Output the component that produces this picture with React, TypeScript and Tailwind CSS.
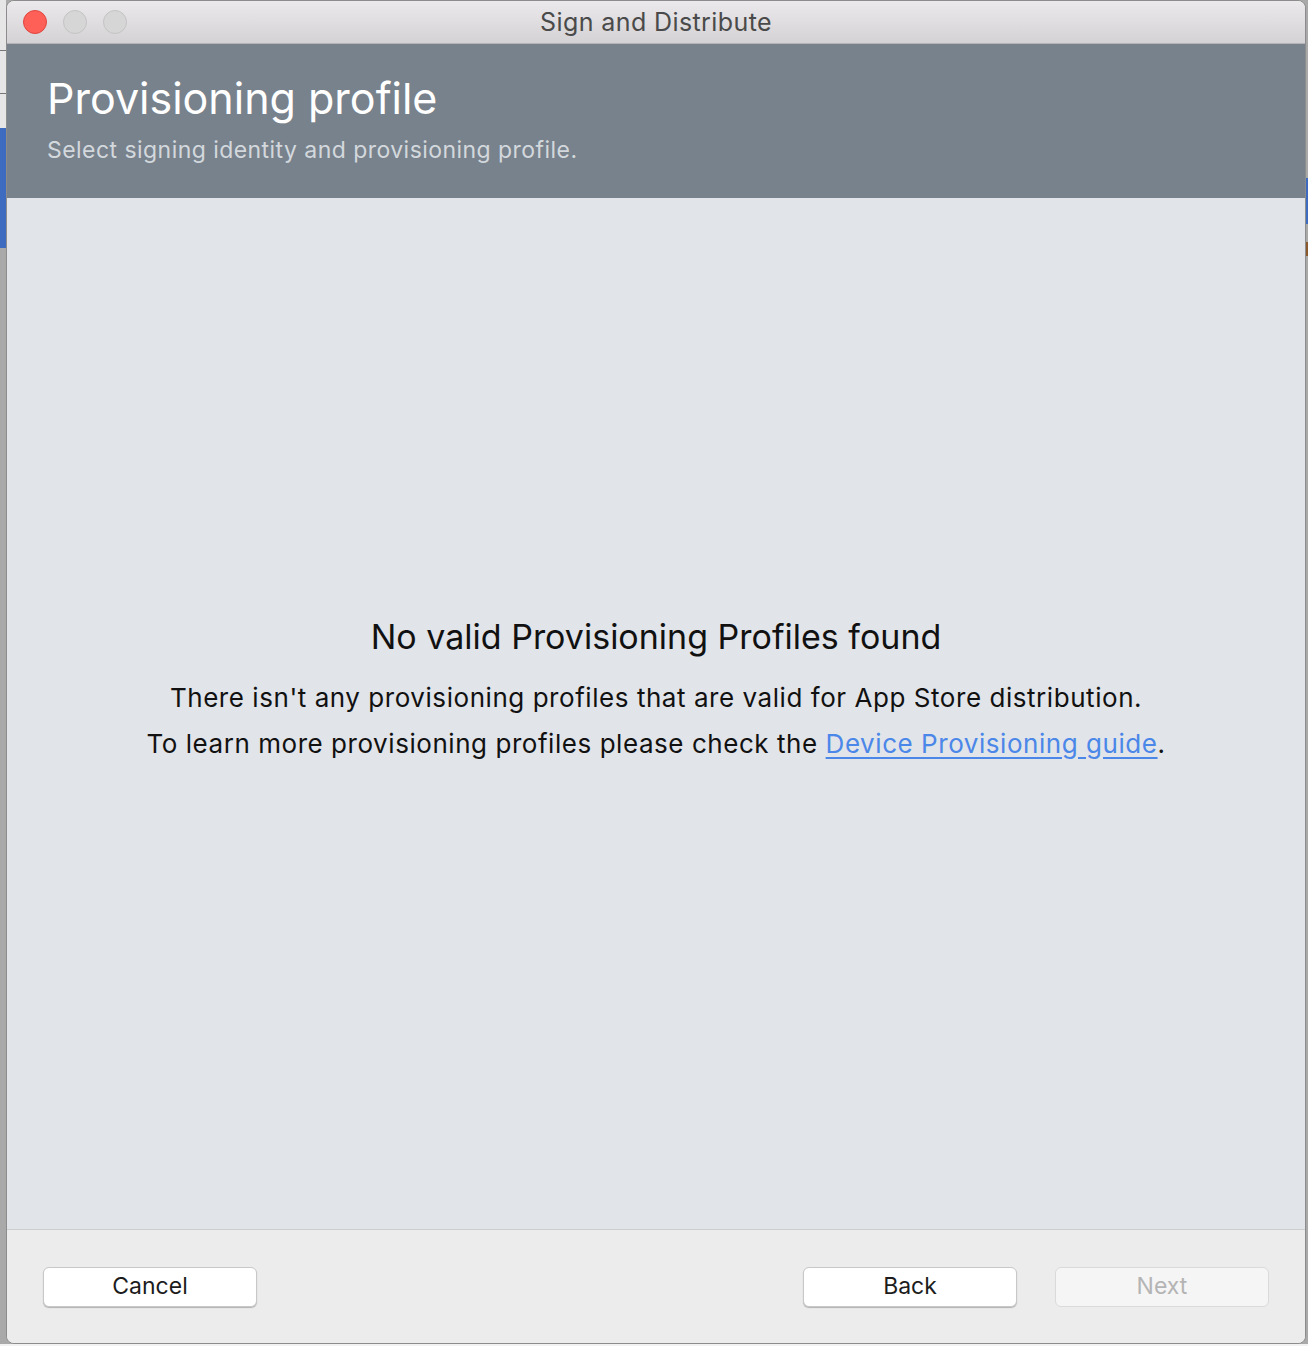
import React from 'react'

const font = { fontFamily: 'Inter, "Noto Sans", sans-serif' }

function TrafficLights() {
  return (
    <div className="flex items-center gap-4 pl-[16px]">
      <span className="h-[24px] w-[24px] rounded-full border border-[#e0443e] bg-[#fe5f57]" />
      <span className="h-[24px] w-[24px] rounded-full border border-[#c4c4c4] bg-[#d6d6d6]" />
      <span className="h-[24px] w-[24px] rounded-full border border-[#c4c4c4] bg-[#d6d6d6]" />
    </div>
  )
}

function MacButton({ label, disabled }: { label: string; disabled?: boolean }) {
  return (
    <button
      className={`h-[40px] w-[214px] rounded-[6px] text-[23px] ${
        disabled
          ? 'border border-[#dadada] bg-[#f5f5f5] text-[#b4b4b4]'
          : 'border border-[#c8c8c8] bg-white text-[#1c1c1c] shadow-[0_1px_1px_rgba(0,0,0,0.25)]'
      }`}
    >
      {label}
    </button>
  )
}

export default function App() {
  return (
    <div className="relative h-[1346px] w-[1308px] overflow-hidden bg-[#a9a9a9]" style={font}>
      {/* bits of the desktop behind the window */}
      <div className="absolute left-0 top-0 h-[128px] w-[6px] bg-[#e6e6e6]" />
      <div className="absolute left-0 top-[50px] h-[1px] w-[6px] bg-[#777]" />
      <div className="absolute left-0 top-[93px] h-[1px] w-[6px] bg-[#777]" />
      <div className="absolute left-0 top-[128px] h-[120px] w-[6px] bg-[#3d6bbf]" />
      <div className="absolute right-0 top-[178px] h-[46px] w-[2px] bg-[#3d6bbf]" />
      <div className="absolute right-0 top-[242px] h-[14px] w-[2px] bg-[#8a5a2e]" />
      <div className="absolute bottom-0 left-0 h-[2px] w-full bg-[#f2f2f2]" />

      <div className="absolute left-[6px] top-0 flex h-[1344px] w-[1300px] flex-col overflow-hidden rounded-[8px] border border-[#8c8c8c] bg-[#ececec]">
        {/* title bar */}
        <div className="relative flex h-[43px] shrink-0 items-center border-b border-[#b4b4b4] bg-gradient-to-b from-[#ebe9eb] to-[#d4d2d4]">
          <TrafficLights />
          <div className="absolute inset-0 flex items-center justify-center pt-[2px] text-[25px] tracking-[0.4px] text-[#4a4a4a]">
            Sign and Distribute
          </div>
        </div>

        {/* header */}
        <div className="flex h-[154px] shrink-0 flex-col bg-[#78828c] px-[40px] pt-[27px]">
          <h1 className="text-[43px] leading-[54px] text-white">Provisioning profile</h1>
          <p className="mt-[10px] text-[23px] leading-[30px] tracking-[0.45px] text-[#d3d8dd]">
            Select signing identity and provisioning profile.
          </p>
        </div>

        {/* content */}
        <div className="flex flex-1 flex-col items-center justify-center bg-[#e1e4e9] pb-[46px]">
          <h2 className="text-[34px] leading-[44px] text-[#111]">No valid Provisioning Profiles found</h2>
          <p className="mt-[16px] text-[26px] leading-[46px] tracking-[0.55px] text-[#111]">
            There isn't any provisioning profiles that are valid for App Store distribution.
          </p>
          <p className="text-[26px] leading-[46px] tracking-[0.55px] text-[#111]">
            To learn more provisioning profiles please check the{' '}
            <a href="#" className="text-[#4a87e8] underline underline-offset-[4px]">
              Device Provisioning guide
            </a>
            .
          </p>
        </div>

        {/* footer */}
        <div className="flex h-[114px] shrink-0 items-center border-t border-[#cdcdcd] bg-[#ececec] px-[36px]">
          <MacButton label="Cancel" />
          <div className="flex-1" />
          <div className="flex gap-[38px]">
            <MacButton label="Back" />
            <MacButton label="Next" disabled />
          </div>
        </div>
      </div>
    </div>
  )
}
